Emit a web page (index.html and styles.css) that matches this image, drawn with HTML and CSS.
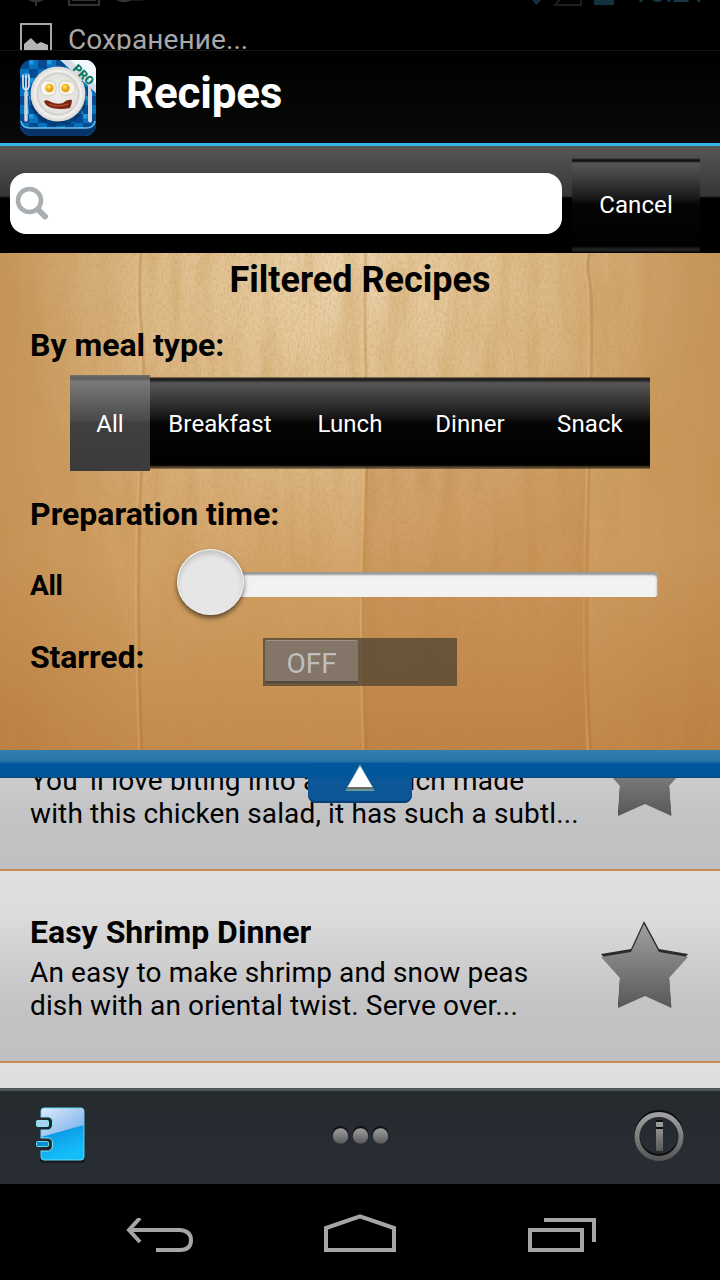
FILE: index.html
```html
<!DOCTYPE html>
<html lang="en">
<head>
	<meta charset="utf-8">
	<title>Recipes</title>
	<link rel="stylesheet" href="styles.css">
</head>
<body>
	<!-- Shared gradients and shapes. -->
	<svg class="defs" width="0" height="0">
		<defs>
			<linearGradient id="grey" x1="0" y1="0" x2="0" y2="1">
				<stop offset="0" stop-color="#a0a0a0"/>
				<stop offset="1" stop-color="#585858"/>
			</linearGradient>
			<filter id="grain" x="0" y="0" width="100%" height="100%">
				<feTurbulence type="fractalNoise" baseFrequency="0.05 0.008" numOctaves="4" seed="8"/>
				<feColorMatrix values="0 0 0 0 .55  0 0 0 0 .29  0 0 0 0 .07  1.5 0 0 0 -.6"/>
			</filter>
			<filter id="speck" x="0" y="0" width="100%" height="100%">
				<feTurbulence type="fractalNoise" baseFrequency="0.5 0.25" numOctaves="2" seed="3"/>
				<feColorMatrix values="0 0 0 0 .5  0 0 0 0 .28  0 0 0 0 .1  1.2 0 0 0 -.48"/>
			</filter>
			<symbol id="star" viewBox="0 0 88 88">
				<path d="M43 0 58 28 87 33 68 56 70 86 44 74 17 86 19 56 0 33 30 28z" fill="#2c2c2c"/>
				<path d="M43 3 58 31 87 36 68 57 70.500 87 44 75 17 87 19 57 0 36 30 31z" fill="url(#grey)"/>
			</symbol>
		</defs>
	</svg>

	<div id="screen">
		<!-- Notification ticker sliding over the status bar. -->
		<div class="status">
			<div class="status-old">
				<svg width="160" height="7" viewBox="0 0 160 7" fill="none" stroke="#343434" stroke-width="2">
					<path d="M28-4q0 5 8 5t8-5M36 1v5M69-2v7h30v-7M72 0h24"/>
					<path d="M116-2q7 5 15 1h12" stroke-width="3"/>
				</svg>
				<svg width="92" height="7" viewBox="0 0 92 7">
					<path d="M4 0h9L8.500 5z" fill="#12303e"/>
					<path d="M35-4 27 5h26v-9" fill="none" stroke="#1e1e1e" stroke-width="2"/>
					<path d="M66 0h20v5H66z" fill="#12303e"/>
				</svg>
				<span class="clock">16:21</span>
			</div>
			<div class="ticker">
				<svg width="32" height="32" viewBox="0 0 32 32">
					<path d="M1 1h30v30H1z" fill="none" stroke="#a8a8a8" stroke-width="2"/>
					<path d="M4 21 11 15l6 6 4-2 7 3v6H4z" fill="#b4b4b4"/>
				</svg>
				<span>Сохранение...</span>
			</div>
		</div>

		<header>
			<svg class="logo" width="76" height="76" viewBox="0 0 76 76">
				<defs>
					<pattern id="cloth" width="18" height="18" patternUnits="userSpaceOnUse">
						<path d="M0 0h18v18H0z" fill="#0872bd"/>
						<path d="M0 0h9v9H0zM9 9h9v9H9z" fill="#064a91"/>
						<path d="M9 0h4.500v4.500H9zM4.500 13h4.500v5H4.500z" fill="#1d9ae0"/>
					</pattern>
					<clipPath id="tile"><rect width="76" height="76" rx="11"/></clipPath>
					<radialGradient id="plate">
						<stop offset="0" stop-color="#ececea"/>
						<stop offset=".68" stop-color="#e4e3e0"/>
						<stop offset=".76" stop-color="#cfcecb"/>
						<stop offset=".82" stop-color="#f2f1ef"/>
						<stop offset="1" stop-color="#d6d5d2"/>
					</radialGradient>
					<radialGradient id="yolk" cx=".4" cy=".35">
						<stop offset="0" stop-color="#fff08a"/>
						<stop offset=".5" stop-color="#f8bd20"/>
						<stop offset="1" stop-color="#e59d1c"/>
					</radialGradient>
				</defs>
				<g clip-path="url(#tile)">
					<path d="M0 0h76v76H0z" fill="url(#cloth)"/>
					<path d="M0 62q2 6 9 6h58q7 0 9-6v14H0z" fill="#07356b"/>
					<path d="M1 61q1 7 9 7h56q8 0 9-7" fill="none" stroke="#6fbfe8" stroke-width="1.500"/>
					<ellipse cx="38" cy="39" rx="28" ry="27" fill="#032f60" opacity=".7"/>
					<circle cx="38" cy="34" r="27.500" fill="url(#plate)"/>
					<g fill="#f7f6ee" stroke="#c9c6b4" stroke-width=".8">
						<path d="M21 25q2-5 8-4 7 0 7 7t-7 8q-7 0-8-4t0-7z"/>
						<path d="M40 24q2-4 7-3 8 1 8 7t-6 7q-9 1-10-5 0-4 1-6z"/>
					</g>
					<circle cx="29.500" cy="28" r="4.300" fill="url(#yolk)"/>
					<circle cx="45.500" cy="28" r="4.300" fill="url(#yolk)"/>
					<path d="M24 41q3-2 7 1 6 3 12 1 4-4 9-3 0 4-2 8-9 2-18 0-7-2-8-7z" fill="#7d2414"/>
					<path d="M29 44q8 4 19 0" fill="none" stroke="#c0603f" stroke-width="1"/>
					<path d="M3 15v10q0 4 3 5M9 15v10q0 4-3 5M6 15v44" fill="none" stroke="#dce3ea" stroke-width="1.700" stroke-linecap="round"/>
					<path d="M6 33v27" stroke="#cfd5da" stroke-width="3.500" stroke-linecap="round"/>
					<path d="M68 23q5 5 4 18v20q-2 3-4 0z" fill="#d3d9df"/>
					<path d="M40 0h36v33z" fill="#d3ddeb"/>
					<path d="M50 0h26v25z" fill="#f4f7fb"/>
					<text class="pro" transform="translate(52 9.500) rotate(44)">PRO</text>
				</g>
			</svg>
			<h1>Recipes</h1>
		</header>

		<div class="search-bar">
			<div class="search-field">
				<svg width="34" height="34" viewBox="0 0 34 34" fill="none" stroke="#a8aeb2">
					<circle cx="14.500" cy="14.500" r="11.500" stroke-width="4.500"/>
					<path d="M23 23.500l7 7" stroke-width="6" stroke-linecap="round"/>
				</svg>
			</div>
			<button class="cancel">Cancel</button>
		</div>

		<!-- Drop-down panel with the filters. -->
		<section class="filters">
			<svg class="wood" width="720" height="497" viewBox="0 0 720 497">
				<rect width="720" height="497" filter="url(#grain)" opacity=".5"/>
				<rect width="720" height="497" filter="url(#speck)" opacity=".6"/>
				<g fill="none" stroke="#a96828" stroke-opacity=".26" stroke-width="3">
					<path d="M141 0q-3 40 1 80t-1 150 1 267"/>
					<path d="M366 0q-2 60 0 120t-1 160 1 217"/>
					<path d="M590 0q-4 10 0 30t-1 200 2 267"/>
				</g>
				<path d="M138 0q-3 40 1 80t-1 150 1 267M363 0q-2 60 0 120t-1 160 1 217M587 0q-4 10 0 30t-1 200 2 267" fill="none" stroke="#f0cf96" stroke-opacity=".2" stroke-width="2"/>
				<path d="M366 215h220v282H366z" fill="#ad6327" opacity=".18"/>
			</svg>
			<div class="filters-body">
				<h2>Filtered Recipes</h2>
				<h3 class="meal-label">By meal type:</h3>
				<div class="segments">
					<button class="segment first active">All</button>
					<button class="segment wide">Breakfast</button>
					<button class="segment">Lunch</button>
					<button class="segment">Dinner</button>
					<button class="segment">Snack</button>
				</div>
				<h3 class="time-label">Preparation time:</h3>
				<div class="time-row">
					<span class="time-value">All</span>
					<div class="slider">
						<div class="knob"></div>
						<div class="track"></div>
					</div>
				</div>
				<div class="starred-row">
					<h3 class="starred-label">Starred:</h3>
					<div class="toggle"><span class="thumb">OFF</span></div>
				</div>
			</div>
		</section>

		<div class="handle">
			<div class="tab">
				<svg width="32" height="30" viewBox="0 0 32 30">
					<path d="M16 3 3 27h26z" fill="#c9d59a" opacity=".5" stroke="#c9d59a" stroke-width="2"/>
					<path d="M16 5 3 26h26z" fill="#6d6a66"/>
					<path d="M16 3 3.500 24h25z" fill="#fff"/>
				</svg>
			</div>
		</div>

		<!-- Recipe list, scrolled part way through a row. -->
		<main class="list">
			<article class="recipe scrolled">
				<div class="info">
					<p><span class="l1">You 'll love biting into a sandwich made</span><br>with this chicken salad, it has such a subtl...</p>
				</div>
				<svg class="star" width="88" height="88"><use href="#star"/></svg>
			</article>
			<article class="recipe">
				<div class="info">
					<h3>Easy Shrimp Dinner</h3>
					<p>An easy to make shrimp and snow peas<br>dish with an oriental twist. Serve over...</p>
				</div>
				<svg class="star" width="88" height="88"><use href="#star"/></svg>
			</article>
			<article class="recipe next"></article>
		</main>

		<footer class="toolbar">
			<svg width="54" height="60" viewBox="0 0 54 60">
				<defs>
					<linearGradient id="cover" x1="0" y1="0" x2=".3" y2="1">
						<stop offset="0" stop-color="#0872d6"/>
						<stop offset="1" stop-color="#14bff8"/>
					</linearGradient>
					<linearGradient id="shine" x1="0" y1="0" x2="1" y2="1">
						<stop offset="0" stop-color="#dfeafb"/>
						<stop offset="1" stop-color="#6faaea"/>
					</linearGradient>
				</defs>
				<rect x="5" y="4" width="45" height="53" rx="3" fill="#181c20"/>
				<rect x="6" y="2" width="43" height="52" rx="3" fill="url(#cover)"/>
				<path d="M6 31V5q0-3 3-3h37q3 0 3 3v14z" fill="url(#shine)"/>
				<rect x="6" y="2" width="43" height="52" rx="3" fill="none" stroke="#62d9f8"/>
				<g fill="#20262b" stroke="#7ce4f5" stroke-width="1">
					<path d="M5.500 11h8q4 1 4 4v4q0 4-4 5h-8M5.500 32h8q4 1 4 4v4q0 4-4 5h-8"/>
				</g>
				<path d="M3 11h3v13H3zM3 32h3v13H3z" fill="#272c32"/>
				<rect x="1.500" y="14.500" width="12" height="6" rx="1" fill="#a9d0f1" stroke="#8ce5f2"/>
				<rect x="1.500" y="35.500" width="12" height="5" rx="1" fill="#108bd5" stroke="#57dbe9"/>
			</svg>
			<svg class="dots" width="58" height="22" viewBox="0 0 58 22">
				<g fill="#101316"><circle cx="8.500" cy="9" r="8"/><circle cx="28.500" cy="9" r="8"/><circle cx="48.500" cy="9" r="8"/></g>
				<g fill="url(#grey)"><circle cx="8.500" cy="11" r="7.700"/><circle cx="28.500" cy="11" r="7.700"/><circle cx="48.500" cy="11" r="7.700"/></g>
			</svg>
			<svg width="52" height="54" viewBox="0 0 52 54">
				<circle cx="26" cy="25.500" r="22" fill="none" stroke="#0b0d0f" stroke-width="5"/>
				<circle cx="26" cy="27.500" r="22" fill="none" stroke="url(#grey)" stroke-width="5"/>
				<path d="M23 11h7v5h-7zM23 17.500h7v5h-7z" fill="#0b0d0f"/>
				<path d="M23 13h7v5h-7zM23 20h7v22h-7z" fill="url(#grey)"/>
			</svg>
		</footer>

		<nav>
			<svg width="68" height="34" viewBox="0 0 68 34" fill="none" stroke="#a6a6a6" stroke-width="4">
				<path d="M14 0 3 12l11 12M3 12h51q11 1 11 10 0 10-11 10H30"/>
			</svg>
			<svg class="home" width="72" height="38" viewBox="0 0 72 38" fill="none" stroke="#a6a6a6" stroke-width="4">
				<path d="M2 36V14L36 2.300 70 14v22z"/>
			</svg>
			<svg width="68" height="34" viewBox="0 0 68 34" fill="none" stroke="#a6a6a6" stroke-width="4">
				<path d="M2 12h52v20H2zM16 2h50v22"/>
			</svg>
		</nav>
	</div>
</body>
</html>
```
FILE: styles.css
```css
* {
	box-sizing: border-box;
	margin: 0;
	padding: 0;
}

body {
	background: #000;
	font-family: Roboto, "Noto Sans", sans-serif;
	color: #000;
}

svg {
	display: block;
	flex: none;
}

.defs {
	position: absolute;
}

button {
	border: 0;
	font: 24px Roboto, sans-serif;
	letter-spacing: .1px;
	color: #fff;
}

#screen {
	display: flex;
	flex-direction: column;
	width: 720px;
	height: 1280px;
	overflow: hidden;
}

/* status bar */
.status {
	height: 50px;
	overflow: hidden;
	background: #000;
}

.status-old {
	display: flex;
	height: 7px;
	overflow: hidden;
}

.status-old svg:nth-child(2) {
	margin-left: 368px;
}

.clock {
	margin: -25px 0 0 11px;
	font-size: 32px;
	line-height: 32px;
	letter-spacing: -1px;
	color: #133747;
}

.ticker {
	display: flex;
	gap: 16px;
	margin-top: 16px;
	padding-left: 20px;
	font-size: 28px;
	line-height: 34px;
	letter-spacing: .1px;
	color: #a8a8a8;
}

/* title */
header {
	display: flex;
	height: 96px;
	padding: 9px 20px 0;
	border-top: 1px solid #161616;
	border-bottom: 3px solid #33b5e5;
	background: linear-gradient(#000, #070909);
}

.pro {
	font: 900 12px Roboto, sans-serif;
	fill: #0b7a5d;
}

h1 {
	margin: 4px 0 0 30px;
	font-size: 44px;
	line-height: 58px;
	letter-spacing: -.2px;
	color: #fff;
}

/* search */
.search-bar {
	display: flex;
	height: 107px;
	padding: 12px 20px 0 10px;
	background: linear-gradient(#575757, #353535 50px, #000 52px);
}

.search-field {
	width: 552px;
	height: 61px;
	margin: 15px 10px 0 0;
	padding: 13px 5px;
	border-radius: 16px;
	background: #fff;
}

.cancel {
	width: 128px;
	height: 95px;
	padding-bottom: 2px;
	background: linear-gradient(#4b4b4b, #111 2px, #111 3px, #555 5px, #474747 15px, #191919 40px, #050505 46px, #000 88px, #222 91px, #222 93px, #000 94px);
}

/* filters */
.filters {
	display: grid;
	height: 497px;
	background:
		radial-gradient(circle at 48% 0, rgba(255, 245, 220, .6), rgba(255, 235, 190, 0) 340px),
		linear-gradient(90deg, rgba(155, 85, 20, .22), transparent 20%, transparent 75%, rgba(155, 85, 20, .22)),
		linear-gradient(#d2a96f, #d3a469 60%, #c38a4b);
}

.wood,
.filters-body {
	grid-area: 1 / 1;
}

.filters-body {
	display: flex;
	flex-direction: column;
	z-index: 1;
}

h2 {
	margin-top: 5px;
	font-size: 36px;
	line-height: 44px;
	text-align: center;
}

h3 {
	font-size: 32px;
	line-height: 38px;
}

.meal-label {
	margin: 24px 0 0 30px;
}

.segments {
	display: flex;
	height: 96px;
	margin: 11px 70px 0;
}

.segment {
	width: 120px;
	height: 92px;
	margin-top: 2px;
	padding-top: 1px;
	background: linear-gradient(rgba(0, 0, 0, .3), #111 2px, #222 3px, #575655 6px, #4a4a4a 13px, #191919 39px, #050505 46px, #000 88px, rgba(0, 0, 0, .3));
}

.segment.wide {
	width: 140px;
}

.segment.first {
	width: 80px;
}

.segment.active {
	height: 96px;
	margin-top: 0;
	background: linear-gradient(#777069, #5c5c5c 3px, #7b7b7b 7px, #707070 14px, #4a4a4a 45px, #404040 48px, #3b3b3b);
}

.time-label {
	margin: 24px 0 0 30px;
}

.time-row {
	display: flex;
	height: 68px;
	margin-top: 15px;
	padding-left: 30px;
}

.time-value {
	width: 147px;
	font-size: 28px;
	font-weight: bold;
	line-height: 76px;
	letter-spacing: -.3px;
}

.slider {
	display: flex;
	align-items: flex-start;
}

.knob {
	width: 67px;
	height: 66px;
	margin-top: 1px;
	border: 1px solid #f4f4f4;
	border-radius: 50%;
	background: #e6e6e6;
	box-shadow: 0 3px 5px rgba(0, 0, 0, .55), inset 0 4px 5px rgba(0, 0, 0, .15);
	z-index: 1;
}

.track {
	width: 424px;
	height: 25px;
	margin: 24px 0 0 -10px;
	border-radius: 0 4px 4px 0;
	background: #f2f2f2;
	box-shadow: inset -1px 3px 2px #999;
}

.starred-row {
	display: flex;
	margin-top: 22px;
	padding-left: 30px;
}

.starred-label {
	width: 233px;
	letter-spacing: -.1px;
}

.toggle {
	width: 194px;
	height: 48px;
	padding: 2px;
	background: rgba(71, 62, 50, .72);
}

.thumb {
	display: block;
	width: 93px;
	height: 43px;
	border-top: 1px solid #9c9184;
	border-bottom: 2px solid #51473a;
	border-radius: 2px;
	background: #837567;
	font-size: 28px;
	line-height: 45px;
	text-align: center;
	color: #c0bebd;
}

/* pull handle */
.handle {
	position: relative;
	height: 28px;
	background: linear-gradient(#347dac, #2774a9 11px, #01579b 14px, #01579b 26px, #0b4478);
	z-index: 2;
}

.tab {
	position: absolute;
	top: 13px;
	left: 308px;
	width: 104px;
	height: 40px;
	padding-left: 36px;
	border-radius: 0 0 8px 8px;
	background: linear-gradient(#01579b 12px, #0b5798 18px);
	box-shadow: inset 0 -2px 1px #073e75;
}

/* recipe list */
.list {
	height: 310px;
	overflow: hidden;
	background: #c58c4f;
}

.recipe {
	display: flex;
	height: 190px;
	margin-bottom: 2px;
	padding: 42px 31px 0 30px;
	background: linear-gradient(#e0e0e0, #dcdcdd 42px, #c4c4c6 130px, #c0c0c2);
}

.scrolled {
	margin-top: -99px;
}

.scrolled .info {
	padding-top: 38px;
}

.info {
	width: 571px;
	white-space: nowrap;
}

.info p {
	margin-top: 5px;
	font-size: 28px;
	line-height: 33px;
	letter-spacing: .13px;
}

.info .l1 {
	letter-spacing: .19px;
}

.star {
	margin-top: 8px;
}

/* toolbar */
.toolbar {
	display: flex;
	align-items: center;
	justify-content: space-between;
	height: 96px;
	padding: 0 35px 4px 35px;
	border-top: 3px solid #50575b;
	background: linear-gradient(#252a2e, #292d36);
}

nav {
	display: flex;
	align-items: flex-end;
	justify-content: space-between;
	height: 96px;
	padding: 0 124px 28px 126px;
	background: #000;
}

.home {
	margin-right: 2px;
}
```
